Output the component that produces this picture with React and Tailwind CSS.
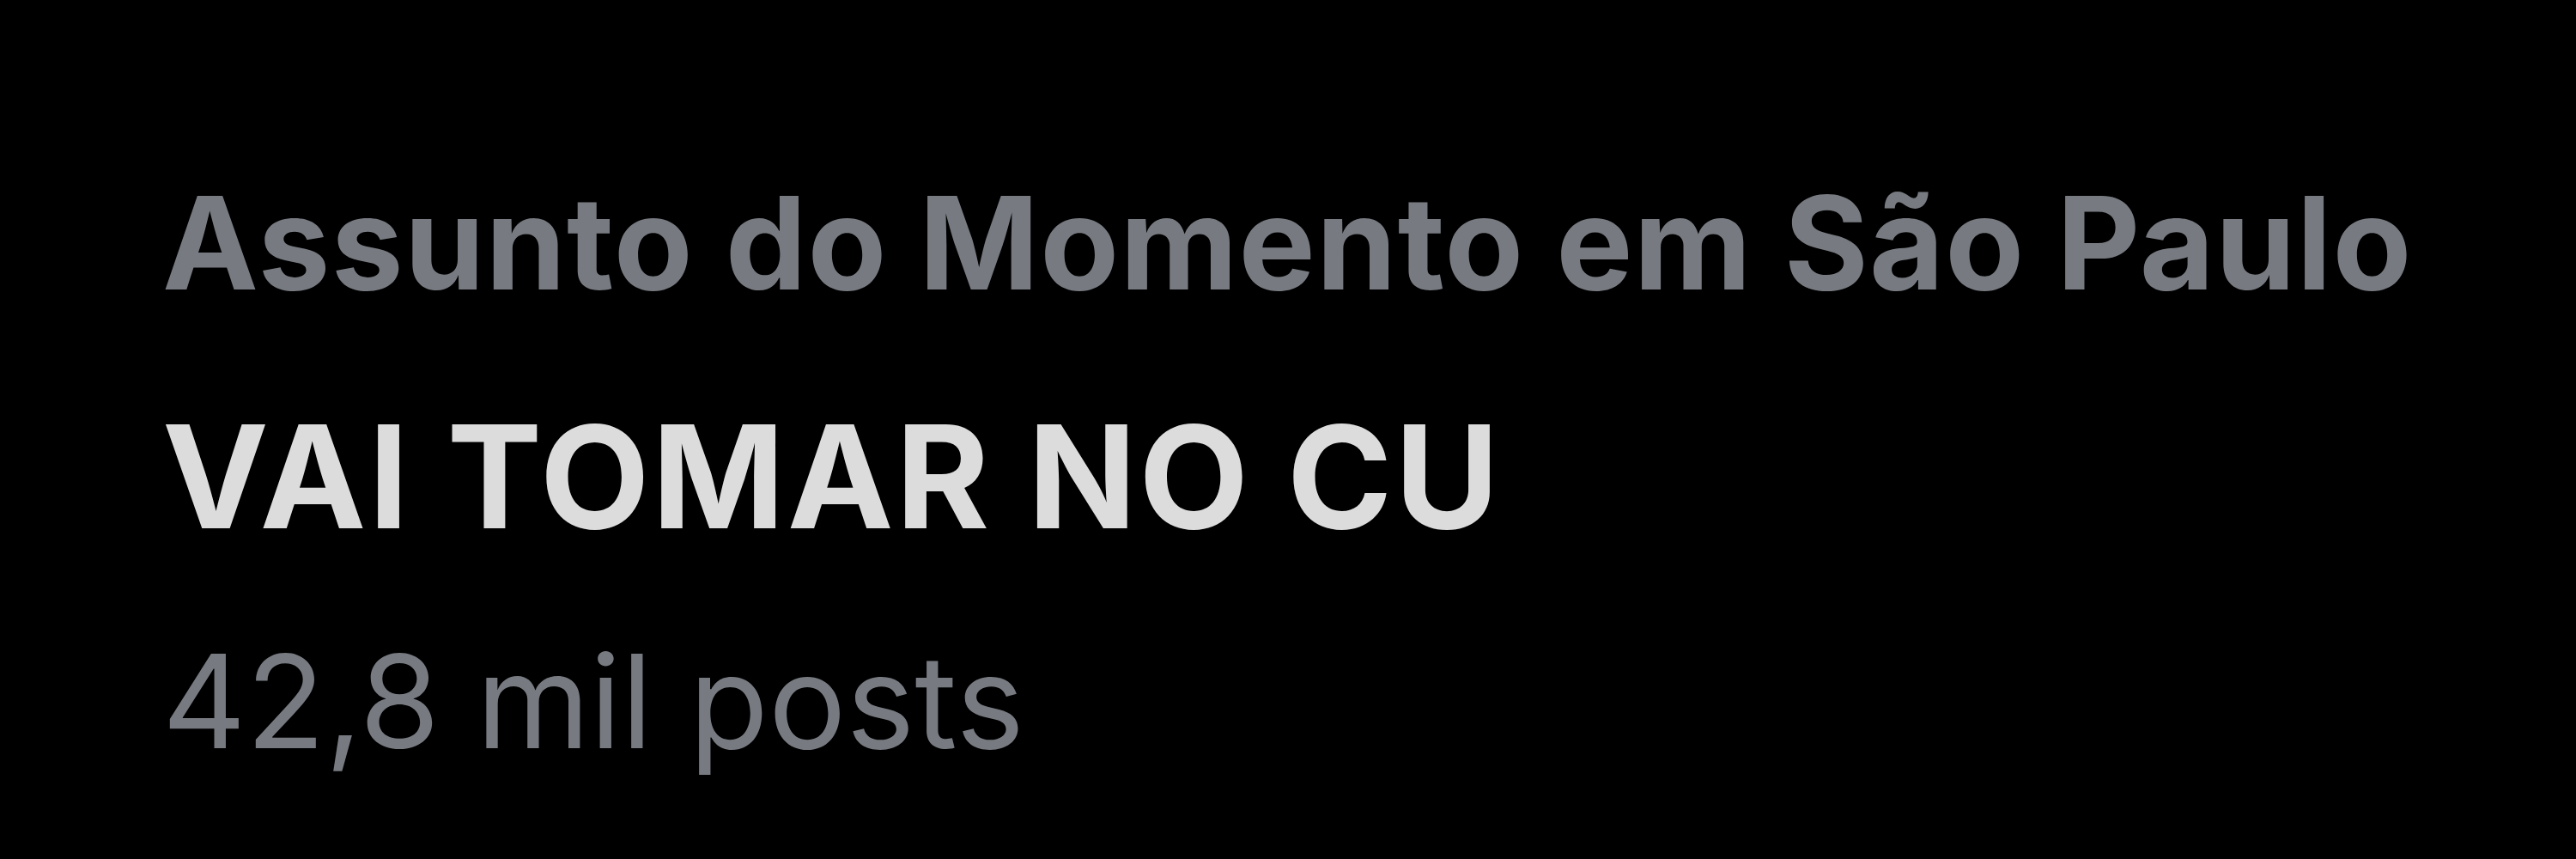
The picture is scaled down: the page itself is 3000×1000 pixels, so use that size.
export default function App() {
  return (
    <div className="w-[3000px] h-[1000px] bg-black overflow-hidden" style={{ fontFamily: "Inter, 'Liberation Sans', sans-serif" }}>
      <div className="flex flex-col pl-[189px] pt-[208px]">
        <div className="text-[150px] leading-[150px] font-bold tracking-[1.2px] text-[#777b81] whitespace-nowrap">
          Assunto do Momento em São Paulo
        </div>
        <div className="mt-[114px] text-[166px] leading-[166px] font-bold tracking-[2.7px] text-[#dcdcdc] whitespace-nowrap">
          VAI TOMAR NO CU
        </div>
        <div className="mt-[103px] text-[151px] leading-[151px] font-normal text-[#777b81] whitespace-nowrap">
          42,8 mil posts
        </div>
      </div>
    </div>
  );
}
